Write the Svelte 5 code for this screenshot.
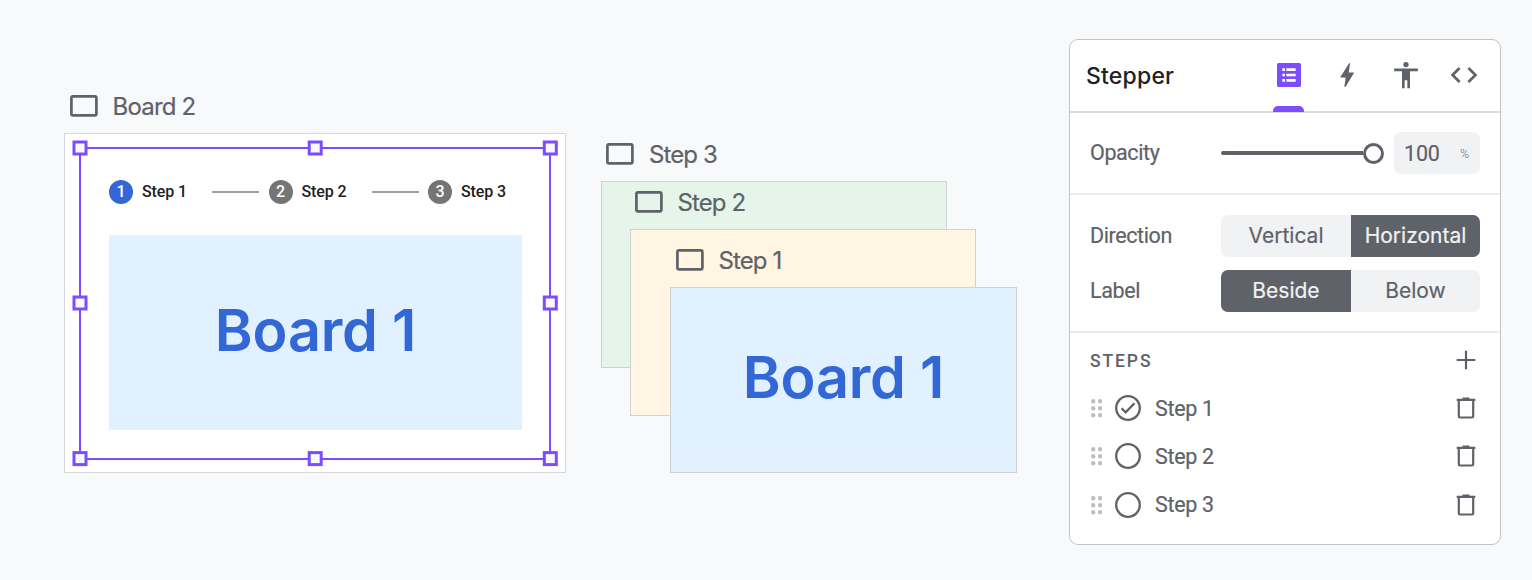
<script>
  const steps = ['Step 1', 'Step 2', 'Step 3'];
  const handles = [
    [80, 148], [315.2, 148], [550.3, 148],
    [80, 303], [550.3, 303],
    [80, 458.6], [315.2, 458.6], [550.3, 458.6]
  ];
  const dots = [0, 1, 2, 3, 4, 5];
</script>

{#snippet label(text, cls)}
  <div class="frame-label {cls}">
    <svg width="28" height="22" viewBox="0 0 28 22"><rect x="1.4" y="1.4" width="25" height="18.9" rx="1.6" fill="none" stroke="#5f6268" stroke-width="2.7" /></svg>
    <span>{text}</span>
  </div>
{/snippet}

<div class="page">
  <main class="canvas">
    {@render label('Board 2', 'l-board')}
    <section class="board">
      <div class="stepper">
        {#each steps as step, i}
          {#if i > 0}<i class="line"></i>{/if}
          <div class="step">
            <b class:active={i === 0}>{i + 1}</b>
            <span>{step}</span>
          </div>
        {/each}
      </div>
      <div class="content"><span class="big">Board 1</span></div>
    </section>
    <svg class="selection" width="580" height="480" viewBox="0 0 580 480">
      <rect x="80" y="148" width="470" height="311" fill="none" stroke="#7c4dff" stroke-width="2" />
      {#each handles as [x, y]}
        <rect x={x - 6} y={y - 6} width="12" height="12" fill="#f8f9fb" stroke="#7c4dff" stroke-width="3" />
      {/each}
    </svg>

    {@render label('Step 3', 'l-three')}
    <div class="card green"></div>
    {@render label('Step 2', 'l-two')}
    <div class="card yellow"></div>
    {@render label('Step 1', 'l-one')}
    <div class="card blue"><span class="big">Board 1</span></div>
  </main>

  <aside class="panel">
    <header>
      <h1>Stepper</h1>
      <nav>
        <div class="tab on">
          <svg width="32" height="32" viewBox="0 0 24 24"><path fill="#7c4dff" fill-rule="evenodd" d="M4.2 3h15.6A1.2 1.2 0 0 1 21 4.200v15.600a1.200 1.200 0 0 1-1.200 1.200H4.200A1.200 1.200 0 0 1 3 19.800V4.200A1.200 1.200 0 0 1 4.200 3zM7 7v2h2V7zM10 7v2h7V7zM7 11v2h2v-2zM10 11v2h7v-2zM7 15v2h2v-2zM10 15v2h7v-2z" /></svg>
        </div>
        <div class="tab"><svg width="32" height="32" viewBox="0 0 24 24"><path fill="#5f6268" d="M13.600 3.100h.7l-1 7h3.500c.6 0 .5.3.3.600L11 20.800h-1l1-7H7.500c-.6 0-.6-.3-.3-.700C8.500 11 10.700 7.700 13.600 3.100z" /></svg></div>
        <div class="tab"><svg width="32" height="32" viewBox="0 0 24 24"><path fill="#5f6268" d="M12 2.200a2 2 0 1 1 0 4 2 2 0 0 1 0-4zM20.900 9.200H15v12.700h-2v-6h-2v6H9V9.200H3.100v-2h17.800z" /></svg></div>
        <div class="tab"><svg width="32" height="32" viewBox="0 0 24 24"><path fill="none" stroke="#5f6268" stroke-width="2" d="M8.700 6.700 3.400 12l5.300 5.300M15.300 6.700l5.300 5.300-5.300 5.300" /></svg></div>
      </nav>
    </header>

    <section class="opacity">
      <span class="name">Opacity</span>
      <div class="slider"><i></i><b></b></div>
      <div class="value"><span>100</span><small>%</small></div>
    </section>

    <section class="options">
      <div class="row">
        <span class="name dir">Direction</span>
        <div class="toggle"><button>Vertical</button><button class="sel">Horizontal</button></div>
      </div>
      <div class="row">
        <span class="name">Label</span>
        <div class="toggle"><button class="sel">Beside</button><button>Below</button></div>
      </div>
    </section>

    <section class="steps">
      <div class="steps-head">
        <h2>STEPS</h2>
        <svg width="20" height="20" viewBox="0 0 20 20"><path d="M10 .7v18.600M.7 10h18.600" stroke="#5f6268" stroke-width="2.200" /></svg>
      </div>
      {#each steps as step, i}
        <div class="item">
          <svg class="grip" width="12" height="20" viewBox="0 0 12 20">
            {#each dots as d}
              <circle cx={3.200 + (d % 2) * 7} cy={3.300 + Math.floor(d / 2) * 7} r="2.200" fill="#bdbec0" />
            {/each}
          </svg>
          <svg class="ring" width="26" height="26" viewBox="0 0 26 26">
            <circle cx="13" cy="13" r="11.800" fill="none" stroke="#5f6268" stroke-width="2.300" />
            {#if i === 0}<path d="M6.600 13.300l4 4 8.900-9" fill="none" stroke="#5f6268" stroke-width="2.300" />{/if}
          </svg>
          <span>{step}</span>
          <svg width="20" height="22" viewBox="0 0 20 22"><path d="M.7 2.900h18.600M6.500 1.500h7" fill="none" stroke="#5f6268" stroke-width="2.200" /><path d="M2.800 3v16.300q0 1.200 1.200 1.200h12q1.200 0 1.200-1.200V3" fill="none" stroke="#5f6268" stroke-width="2.200" /></svg>
        </div>
      {/each}
    </section>
  </aside>
</div>

<style>
  :global(body) { margin: 0; background: #f8f9fb; }
  .page { display: flex; width: 1532px; height: 580px; background: #f8f9fb; font-family: Roboto, sans-serif; color: #5f6268; overflow: hidden; }
  .page * { box-sizing: border-box; }
  svg { display: block; flex: none; }
  .canvas { position: relative; width: 1069px; flex: none; }

  .frame-label { position: absolute; display: flex; align-items: center; gap: 15px; height: 30px; font: 400 24px/30px Inter, sans-serif; letter-spacing: -0.9px; white-space: nowrap; -webkit-text-stroke: 0.2px #5f6268; }
  .frame-label span { padding-top: 2px; }
  .l-board { left: 69.500px; top: 91px; letter-spacing: -0.8px; }
  .l-three { left: 606px; top: 139px; }
  .l-two { left: 634.500px; top: 187px; }
  .l-one { left: 675.500px; top: 245px; }

  .board { position: absolute; left: 64px; top: 133px; width: 502px; height: 340px; padding: 45px 43px 0 44px; border: 1px solid #d5d7da; background: #fff; }
  .stepper { display: flex; align-items: center; height: 25px; }
  .step { display: flex; align-items: center; gap: 9px; width: 103px; flex: none; font: 500 16px/24px Roboto, sans-serif; letter-spacing: -0.1px; color: #212121; }
  .step b { display: grid; place-items: center; width: 24px; height: 24px; border-radius: 50%; background: #757575; color: #fff; font-weight: 500; }
  .step b.active { background: #3367d6; }
  .line { width: 47px; height: 2px; margin-right: 9.500px; flex: none; background: #9e9e9e; }
  .content { display: grid; place-items: center; width: 413px; height: 195px; margin-top: 31px; padding-bottom: 6px; background: #e1f1ff; }
  .big { font: 600 57.500px/70px Inter, sans-serif; letter-spacing: -0.2px; color: #3367d6; white-space: nowrap; }
  .selection { position: absolute; left: 0; top: 0; }

  .card { position: absolute; width: 346px; height: 187px; border: 1px solid #cfd1d4; }
  .green { left: 601px; top: 181px; background: #e6f5ea; }
  .yellow { left: 630px; top: 229px; background: #fff5e0; }
  .blue { left: 670px; top: 287px; width: 347px; height: 186px; display: grid; place-items: center; padding-bottom: 6px; background: linear-gradient(#e1f1ff 75%, #e3f0fd); }

  .panel { width: 432px; height: 506px; margin-top: 39px; flex: none; border: 1px solid #c3c4c8; border-radius: 9px; background: #fff; }
  header { display: flex; justify-content: space-between; height: 73px; padding: 0 20px 0 16px; border-bottom: 2px solid #dcdcde; }
  h1 { margin: 0; font: 500 23px/73px Inter, sans-serif; letter-spacing: 0.2px; color: #202124; }
  nav { display: flex; gap: 27px; margin-bottom: -1px; }
  .tab { display: flex; flex-direction: column; justify-content: space-between; width: 31.500px; height: 72px; padding-top: 19px; align-items: center; }
  .tab.on::after { content: ''; width: 31px; height: 6px; border-radius: 5px 5px 0 0; background: #7c4dff; }

  .name { width: 131px; font-size: 21.500px; line-height: 28px; letter-spacing: -0.4px; flex: none; -webkit-text-stroke: 0.2px #5f6268; }
  .opacity { display: flex; align-items: center; height: 82px; padding: 0 20px; border-bottom: 2px solid #ececed; }
  .slider { display: flex; align-items: center; width: 162.500px; flex: none; }
  .slider i { flex: 1; height: 4px; background: #5f6268; border-radius: 2px 0 0 2px; }
  .slider b { width: 21px; height: 21px; border: 3px solid #5f6268; border-radius: 50%; }
  .value { display: flex; align-items: center; justify-content: space-between; width: 86px; height: 42px; margin-left: 10.500px; padding: 0 11px 0 10px; border-radius: 7px; background: #f1f2f4; font-size: 21.500px; letter-spacing: -0.2px; flex: none; -webkit-text-stroke: 0.2px #5f6268; }
  .value small { padding-top: 1px; font-size: 12.500px; color: #96989c; -webkit-text-stroke: 0; }

  .options { display: flex; flex-direction: column; gap: 13px; height: 138px; padding: 20px 20px 0; border-bottom: 2px solid #ececed; }
  .row { display: flex; align-items: center; height: 42px; }
  .toggle { display: grid; grid-template-columns: 130px 129px; width: 259px; height: 42px; border-radius: 7px; overflow: hidden; background: #f1f2f4; flex: none; }
  button { padding: 0; border: 0; background: none; color: #5f6268; font: 400 21px/40px Inter, sans-serif; -webkit-text-stroke: 0.2px currentColor; }
  .sel { background: #5f6268; color: #f1f2f4; }

  .steps { padding: 3px 24px 0 20px; }
  .steps-head { display: flex; align-items: center; justify-content: space-between; height: 48px; }
  h2 { margin: 0; padding-top: 1px; font: 500 17.500px/24px Roboto, sans-serif; letter-spacing: 1.900px; }
  .item { display: flex; align-items: center; height: 48.250px; font-size: 21.500px; letter-spacing: -0.3px; -webkit-text-stroke: 0.2px #5f6268; }
  .ring { margin: 0 14px 0 13px; }
  .item span { flex: 1; }
</style>
